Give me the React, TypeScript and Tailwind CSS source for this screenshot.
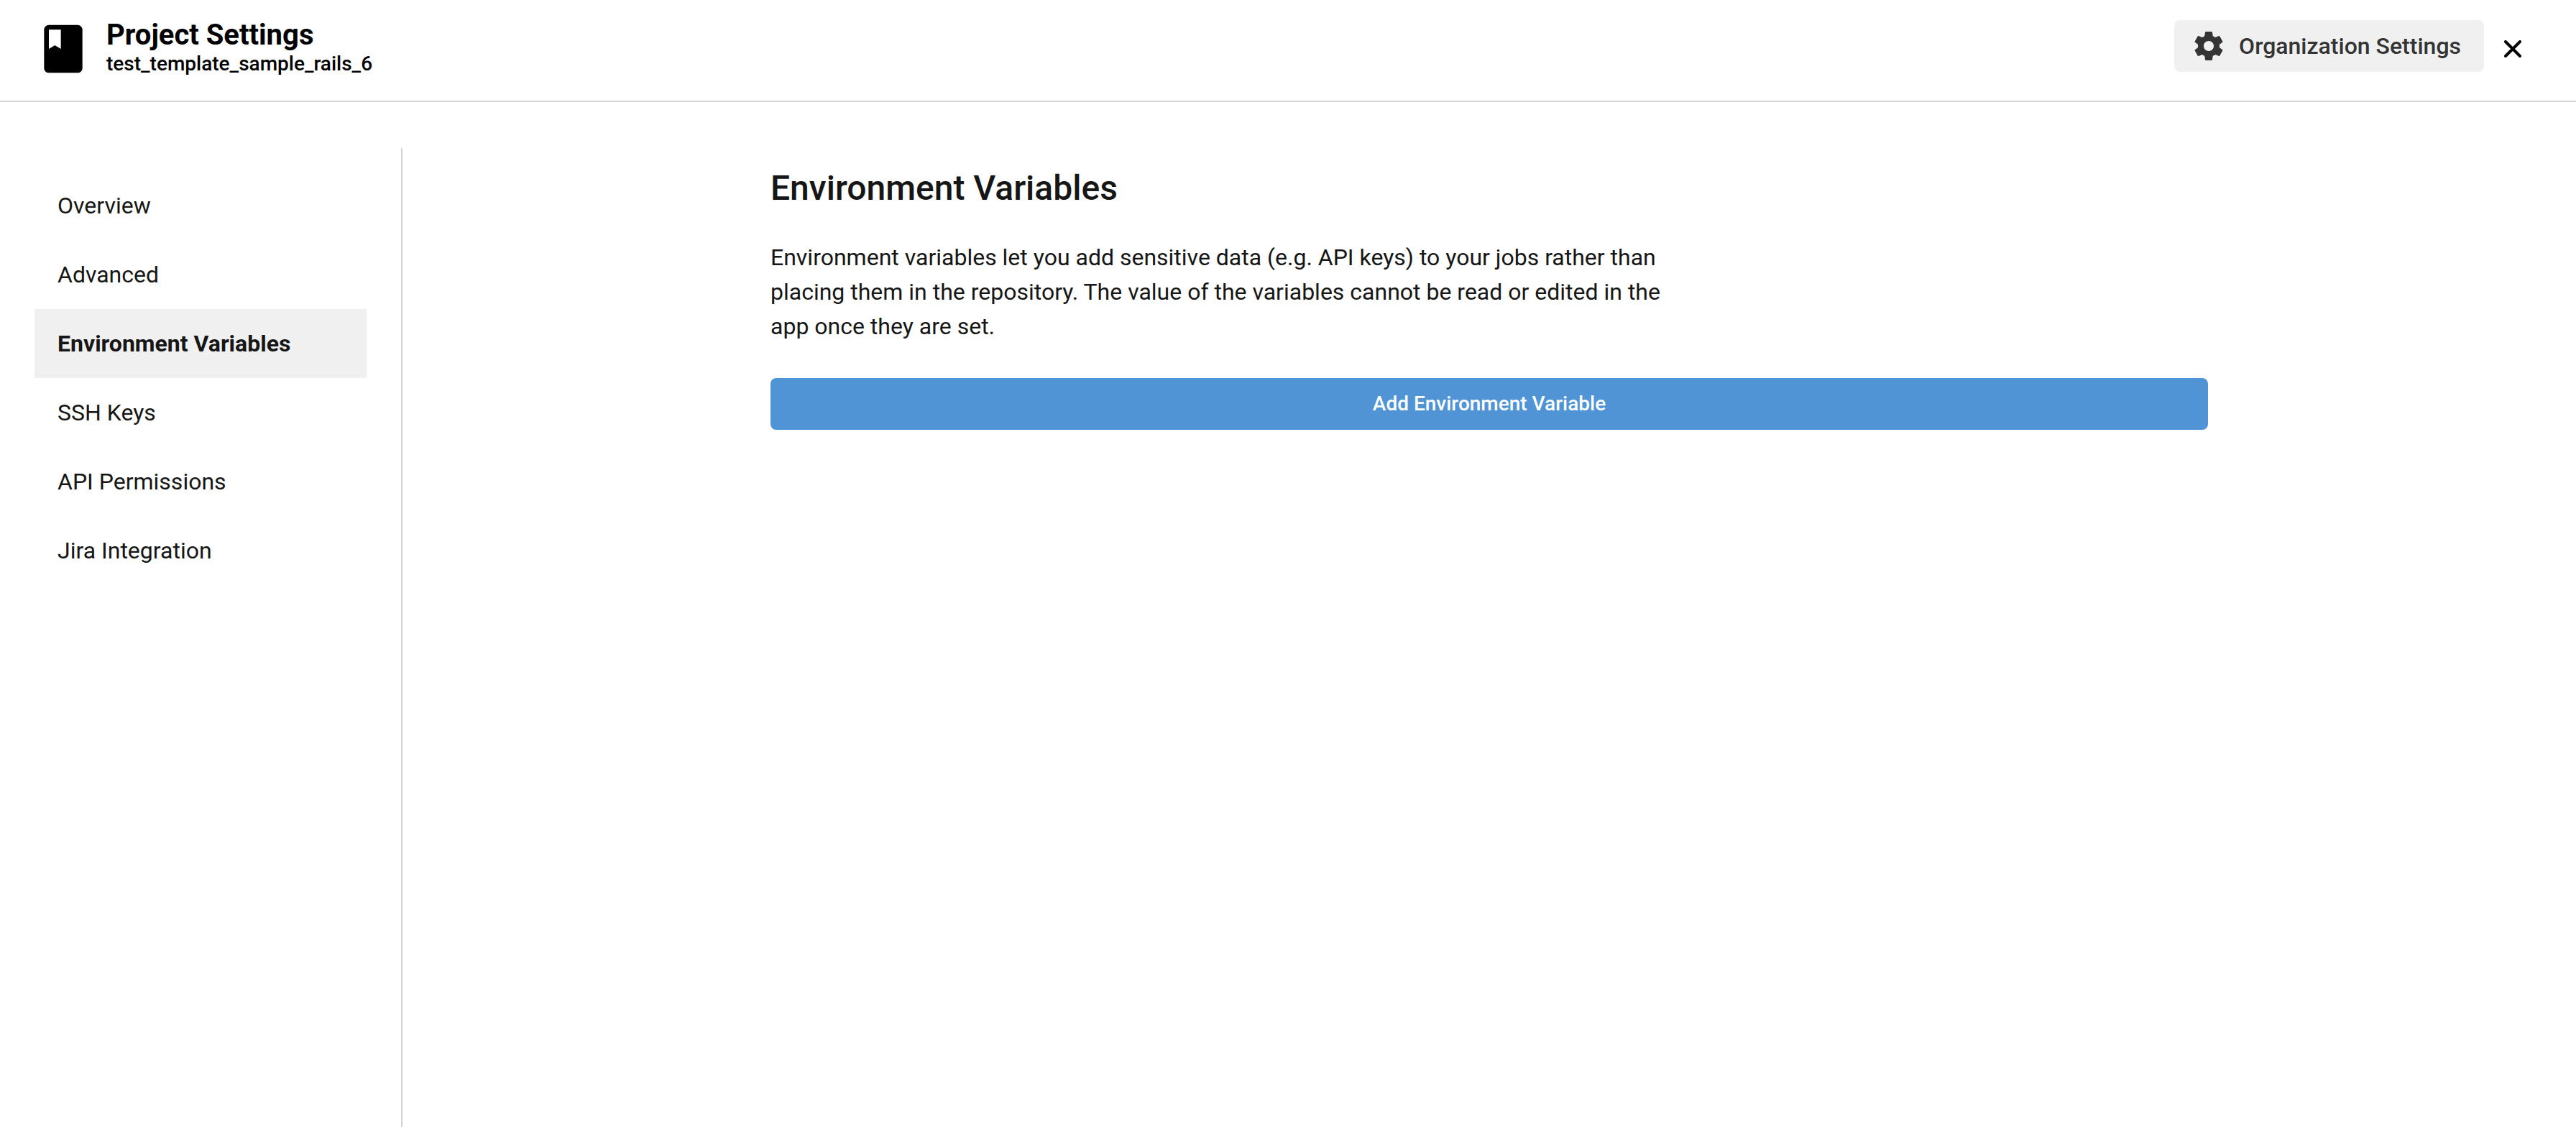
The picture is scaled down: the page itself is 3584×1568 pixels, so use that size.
import React from "react";
import { MdBook } from "react-icons/md";

const navItems = [
  "Overview",
  "Advanced",
  "Environment Variables",
  "SSH Keys",
  "API Permissions",
  "Jira Integration",
];

const activeItem = "Environment Variables";

function GearIcon() {
  return (
    <svg viewBox="0 0 24 24" className="size-12" fill="currentColor" aria-hidden="true">
      <path d="M19.43 12.98c.04-.32.07-.64.07-.98s-.03-.66-.07-.98l2.11-1.65c.19-.15.24-.42.12-.64l-2-3.46c-.12-.22-.39-.3-.61-.22l-2.49 1c-.52-.4-1.08-.73-1.69-.98l-.38-2.65C14.46 2.18 14.25 2 14 2h-4c-.25 0-.46.18-.49.42l-.38 2.65c-.61.25-1.17.59-1.69.98l-2.49-1c-.23-.09-.49 0-.61.22l-2 3.46c-.13.22-.07.49.12.64l2.11 1.65c-.04.32-.07.65-.07.98s.03.66.07.98l-2.11 1.65c-.19.15-.24.42-.12.64l2 3.46c.12.22.39.3.61.22l2.49-1c.52.4 1.08.73 1.69.98l.38 2.65c.03.24.24.42.49.42h4c.25 0 .46-.18.49-.42l.38-2.65c.61-.25 1.17-.59 1.69-.98l2.49 1c.23.09.49 0 .61-.22l2-3.46c.12-.22.07-.49-.12-.64l-2.11-1.65zM12 15.5c-1.93 0-3.5-1.57-3.5-3.5s1.57-3.5 3.5-3.5 3.5 1.57 3.5 3.5-1.57 3.5-3.5 3.5z" />
    </svg>
  );
}

function CloseIcon() {
  return (
    <svg viewBox="0 0 24 24" className="size-6" fill="none" stroke="currentColor" strokeWidth="4" strokeLinecap="round" aria-hidden="true">
      <path d="M2 2 22 22M22 2 2 22" />
    </svg>
  );
}

function Header() {
  return (
    <header className="flex items-start justify-between border-b-2 border-[#d4d4d4] px-12 pt-7 pb-8 text-black">
      <div className="flex items-start gap-5">
        <MdBook className="size-20" aria-hidden="true" />
        <div className="-mt-1">
          <h1 className="text-[40px] leading-[50px] font-bold">Project Settings</h1>
          <p className="text-[28px] leading-[30px] font-medium">test_template_sample_rails_6</p>
        </div>
      </div>
      <div className="flex items-start">
        <a href="#organization" className="flex h-18 items-center gap-[18px] rounded-lg bg-[#f0f0f0] pr-8 pl-6 text-[32px] leading-12 font-medium text-[#343434]">
          <GearIcon />
          Organization Settings
        </a>
        <button type="button" aria-label="Close" className="flex size-20 items-center justify-center">
          <CloseIcon />
        </button>
      </div>
    </header>
  );
}

function Sidebar() {
  return (
    <nav aria-label="Project settings" className="w-[560px] shrink-0 border-r-2 border-[#d4d4d4] pt-8 pr-12 pl-12">
      <ul>
        {navItems.map((item) => (
          <li key={item}>
            <a
              href="#"
              aria-current={item === activeItem ? "page" : undefined}
              className={
                item === activeItem
                  ? "block bg-[#f0f0f0] px-8 py-6 text-[32px] leading-12 font-bold"
                  : "block px-8 py-6 text-[32px] leading-12"
              }
            >
              {item}
            </a>
          </li>
        ))}
      </ul>
    </nav>
  );
}

export default function App() {
  return (
    <div className="flex min-h-screen flex-col bg-white font-['Roboto',sans-serif] text-[#161616]">
      <Header />
      <div className="flex flex-1 pt-16">
        <Sidebar />
        <main className="flex-1 px-12 pt-6">
          <div className="mx-auto max-w-[2000px]">
            <h2 className="text-5xl leading-16 font-medium">Environment Variables</h2>
            <p className="mt-10 max-w-[1280px] text-[32px] leading-12">
              Environment variables let you add sensitive data (e.g. API keys) to your jobs rather than placing them in
              the repository. The value of the variables cannot be read or edited in the app once they are set.
            </p>
            <button type="button" className="mt-12 h-18 w-full rounded-lg bg-[#5094d6] text-[28px] font-medium text-white">
              Add Environment Variable
            </button>
          </div>
        </main>
      </div>
    </div>
  );
}
